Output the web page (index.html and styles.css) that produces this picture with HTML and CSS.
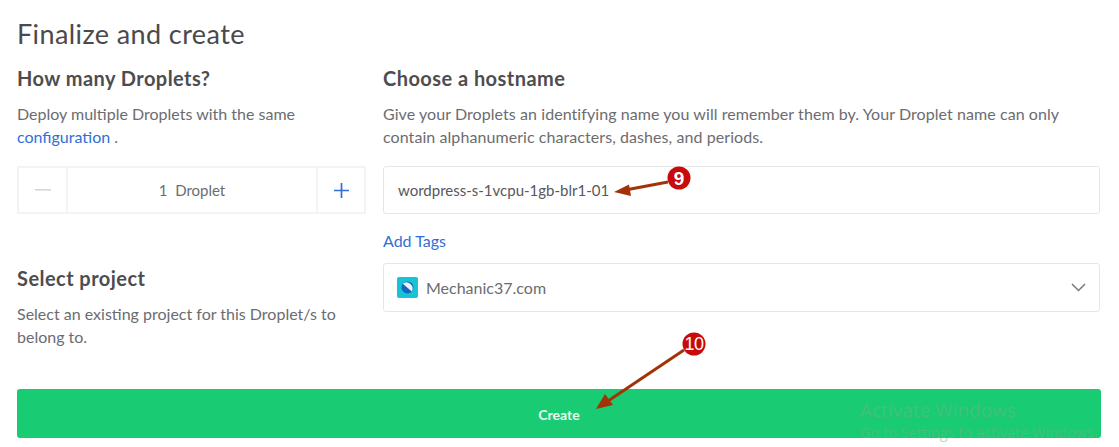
FILE: index.html
```html
<!DOCTYPE html>
<html lang="en">
<head>
<meta charset="utf-8">
<title>Finalize and create</title>
<link rel="stylesheet" href="styles.css">
</head>
<body>
<main class="page">
  <h1 class="title">Finalize and create</h1>
  <div class="columns">
    <section class="left">
      <h2 class="heading">How many Droplets?</h2>
      <p class="desc">Deploy multiple Droplets with the same <a class="link" href="#">configuration</a> .</p>
      <div class="stepper">
        <div class="step minus"><svg width="16" height="2" viewBox="0 0 16 2"><rect width="16" height="1.6" fill="#d6d6d6"/></svg></div>
        <div class="count">1&nbsp; Droplet</div>
        <div class="step plus"><svg width="15" height="15" viewBox="0 0 15 15"><path d="M7.5 0v15M0 7.5h15" stroke="#2f6fd6" stroke-width="1.7" fill="none"/></svg></div>
      </div>
      <h2 class="heading project-heading">Select project</h2>
      <p class="desc">Select an existing project for this Droplet/s to belong to.</p>
    </section>
    <section class="right">
      <h2 class="heading">Choose a hostname</h2>
      <p class="desc">Give your Droplets an identifying name you will remember them by. Your Droplet name can only contain alphanumeric characters, dashes, and periods.</p>
      <div class="field host">wordpress-s-1vcpu-1gb-blr1-01</div>
      <a class="link tags" href="#">Add Tags</a>
      <div class="field select">
        <svg class="logo" width="21" height="21" viewBox="0 0 21 21"><rect width="21" height="21" rx="2" fill="#16c4d4"/><circle cx="10.500" cy="10.500" r="6" fill="#1466c4"/><path d="M5.800 6.800A6 6 0 0 1 14.800 14.400z" fill="#e8f6fb"/></svg>
        <span class="project">Mechanic37.com</span>
        <svg class="chevron" width="15" height="9" viewBox="0 0 15 9"><path d="M1 1l6.500 6.500L14 1" stroke="#777" stroke-width="1.500" fill="none"/></svg>
      </div>
    </section>
  </div>
  <div class="create"><span class="create-label">Create</span></div>
</main>
<div class="watermark">
  <div class="wm-big">Activate Windows</div>
  <div class="wm-small">Go to Settings to activate Windows.</div>
</div>
<svg class="arrows" width="1119" height="447" viewBox="0 0 1119 447">
  <path d="M668 182 628 189.500" stroke="#a33208" stroke-width="3" fill="none"/>
  <path d="M614 192 629 184.500 631 196z" fill="#a33208"/>
  <path d="M684 350 608 401" stroke="#a33208" stroke-width="3" fill="none"/>
  <path d="M596 409 605 394 613 405z" fill="#a33208"/>
  <circle cx="679" cy="178" r="11.500" fill="#c80a0a"/>
  <circle cx="694" cy="344" r="11.500" fill="#c80a0a"/>
  <text class="badge" x="679" y="185" text-anchor="middle">9</text>
  <text class="badge badge-wide" x="694" y="350" text-anchor="middle">10</text>
</svg>
</body>
</html>
```
FILE: styles.css
```css
* { box-sizing: border-box; }
html, body { margin: 0; height: 447px; overflow: hidden; background: #fff; }
body { position: relative; font-family: "Lato", "Liberation Sans", sans-serif; color: #666; }
.page { padding: 19px 18px 0 17px; }
.title { margin: 0; font-size: 27px; line-height: 30px; font-weight: 400; color: #4a4a4d; letter-spacing: .4px; }
.columns { display: grid; grid-template-columns: 349px 717px; column-gap: 17px; margin-top: 17px; }
.heading { margin: 0; font-size: 20px; line-height: 24px; font-weight: 700; color: #4d4d50; letter-spacing: .45px; }
.desc { margin: 12px 0 0; font-size: 16px; line-height: 23px; color: #6c6c70; }
.left .desc { max-width: 330px; }
.right .desc { letter-spacing: .07px; }
.link { color: #2f6fd6; text-decoration: none; }
.stepper { display: flex; height: 48px; margin-top: 18px; border: 2px solid #f3f3f3; }
.step { width: 48px; display: flex; align-items: center; justify-content: center; }
.minus { width: 49px; border-right: 2px solid #f3f3f3; }
.plus { border-left: 2px solid #f3f3f3; }
.count { flex: 1; display: flex; align-items: center; justify-content: center; font-size: 15px; color: #6c6c70; }
.project-heading { margin-top: 52px; }
.field { display: flex; align-items: center; height: 48px; border: 1px solid #e6e6e6; border-radius: 3px; padding: 0 14px 0 13px; font-size: 15px; color: #58585c; }
.host { margin-top: 18px; padding-left: 14px; }
.tags { display: block; margin-top: 17px; font-size: 16px; line-height: 20px; }
.select { margin-top: 12px; height: 49px; }
.logo { flex: none; margin-right: 8px; }
.project { flex: 1; font-size: 16px; color: #6c6c70; }
.chevron { flex: none; margin-right: -1px; }
.create { display: flex; align-items: center; justify-content: center; width: 1084px; height: 49px; margin-top: 41px; border-radius: 3px; background: #19cb72; }
.create-label { font-size: 14px; font-weight: 700; color: #e6fbef; margin-top: 1px; }
.arrows { position: absolute; left: 0; top: 0; pointer-events: none; }
.badge { font: 700 19px "Liberation Sans", sans-serif; fill: #fff; }
.badge-wide { font-weight: 400; font-size: 18px; letter-spacing: -.5px; }
.watermark { position: absolute; left: 860px; top: 399px; color: rgba(110,180,140,.5); white-space: nowrap; font-family: "Open Sans", sans-serif; }
.wm-big { font-size: 19px; line-height: 23px; }
.wm-small { font-size: 14.500px; line-height: 22px; }
```
